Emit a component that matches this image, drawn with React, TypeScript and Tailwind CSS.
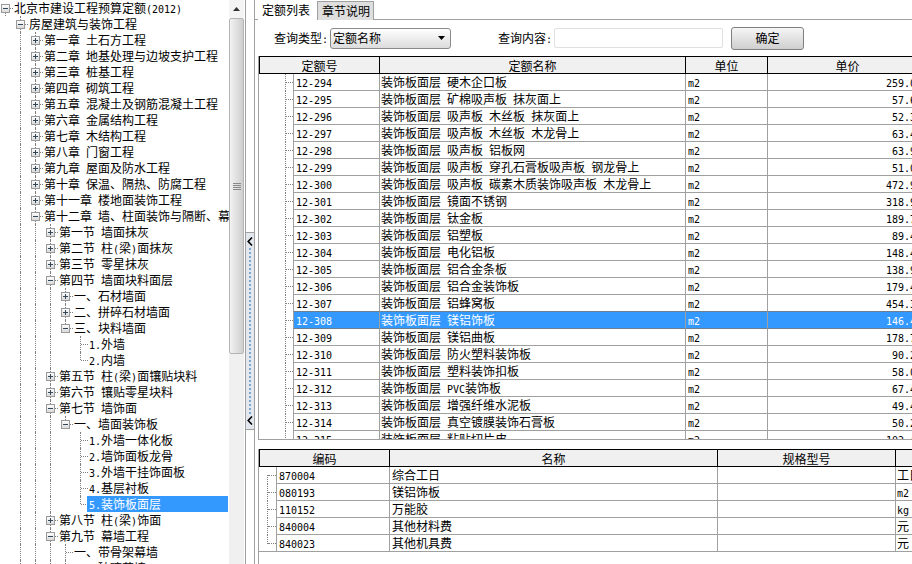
import React from "react";

const LINE = "border-[#a0a0a0]";

function T({ s }: { s: string }) {
  const parts = s.split(/([\x20-\x7e]+)/).filter(Boolean);
  return (
    <>
      {parts.map((p, i) =>
        /^[\x20-\x7e]+$/.test(p) ? (
          <span key={i} className="font-['DejaVu_Sans_Mono',monospace] text-[10px]">
            {p}
          </span>
        ) : (
          <span key={i}>{p}</span>
        )
      )}
    </>
  );
}

type TreeRow = [number, "m" | "p" | "l", string];

const tree: TreeRow[] = [
  [0, "m", "北京市建设工程预算定额(2012)"],
  [1, "m", "房屋建筑与装饰工程"],
  [2, "p", "第一章 土石方工程"],
  [2, "p", "第二章 地基处理与边坡支护工程"],
  [2, "p", "第三章 桩基工程"],
  [2, "p", "第四章 砌筑工程"],
  [2, "p", "第五章 混凝土及钢筋混凝土工程"],
  [2, "p", "第六章 金属结构工程"],
  [2, "p", "第七章 木结构工程"],
  [2, "p", "第八章 门窗工程"],
  [2, "p", "第九章 屋面及防水工程"],
  [2, "p", "第十章 保温、隔热、防腐工程"],
  [2, "p", "第十一章 楼地面装饰工程"],
  [2, "m", "第十二章 墙、柱面装饰与隔断、幕墙工程"],
  [3, "p", "第一节 墙面抹灰"],
  [3, "p", "第二节 柱(梁)面抹灰"],
  [3, "p", "第三节 零星抹灰"],
  [3, "m", "第四节 墙面块料面层"],
  [4, "p", "一、石材墙面"],
  [4, "p", "二、拼碎石材墙面"],
  [4, "m", "三、块料墙面"],
  [5, "l", "1.外墙"],
  [5, "l", "2.内墙"],
  [3, "p", "第五节 柱(梁)面镶贴块料"],
  [3, "p", "第六节 镶贴零星块料"],
  [3, "m", "第七节 墙饰面"],
  [4, "m", "一、墙面装饰板"],
  [5, "l", "1.外墙一体化板"],
  [5, "l", "2.墙饰面板龙骨"],
  [5, "l", "3.外墙干挂饰面板"],
  [5, "l", "4.基层衬板"],
  [5, "l", "5.装饰板面层"],
  [3, "p", "第八节 柱(梁)饰面"],
  [3, "m", "第九节 幕墙工程"],
  [4, "l", "一、带骨架幕墙"],
  [4, "p", "二、玻璃幕墙"],
];
const SELECTED_TREE = 31;

// Rows past the bottom of the picture: they keep the guide lines running.
const levels = [...tree.map((r) => r[0]), 4, 3, 2, 1];

function continues(i: number, lvl: number) {
  for (let k = i + 1; k < levels.length; k++) {
    if (levels[k] < lvl) return false;
    if (levels[k] === lvl) return true;
  }
  return false;
}

function Box({ plus }: { plus: boolean }) {
  return (
    <svg width="9" height="9" viewBox="0 0 9 9" className="absolute left-[3px] top-[4px]">
      <defs>
        <linearGradient id="bx" x1="0" y1="0" x2="0" y2="1">
          <stop offset="0" stopColor="#ffffff" />
          <stop offset="1" stopColor="#d8d8d8" />
        </linearGradient>
      </defs>
      <rect x="0.5" y="0.5" width="8" height="8" fill="url(#bx)" stroke="#9a9a9a" />
      <path d={plus ? "M2 4.5H7M4.5 2V7" : "M2 4.5H7"} stroke="#33475b" strokeWidth="1" />
    </svg>
  );
}

function Tree() {
  return (
    <div className="w-[229px] shrink-0 overflow-hidden h-full">
      {tree.map(([lvl, kind, text], i) => {
        const next = continues(i, lvl);
        const sel = i === SELECTED_TREE;
        return (
          <div key={i} className="flex h-[16px] -ml-[2px] leading-[16px] whitespace-pre">
            {Array.from({ length: lvl }).map((_, j) => (
              <div key={j} className="relative w-[15px] shrink-0">
                {continues(i, j) && (
                  <div className="absolute left-[7px] top-0 h-full border-l border-dotted border-[#808080]" />
                )}
              </div>
            ))}
            <div className="relative w-[15px] shrink-0">
              <div
                className={`absolute left-[7px] border-l border-dotted border-[#808080] ${
                  i === 0 ? "top-[8px] h-[8px]" : next ? "top-0 h-[16px]" : "top-0 h-[8px]"
                }`}
              />
              <div className="absolute left-[8px] top-[8px] w-[7px] border-t border-dotted border-[#808080]" />
              {kind !== "l" && <Box plus={kind === "p"} />}
            </div>
            <div
              className={`relative -ml-px pl-[2px] ${
                sel ? "flex-1 mr-[1px] bg-[#3399ff] text-white" : ""
              }`}
            >
              <T s={text} />
            </div>
          </div>
        );
      })}
    </div>
  );
}

function Scrollbar() {
  return (
    <div className="w-[16px] shrink-0 h-full flex flex-col pr-px">
      <div className="h-[18px] shrink-0 flex items-center justify-center bg-[#f4f4f4]">
        <svg width="7" height="4" viewBox="0 0 7 4">
          <path d="M3.5 0L7 4H0Z" fill="#333" />
        </svg>
      </div>
      <div className="h-[336px] shrink-0 rounded-[2px] border border-[#b4b4b4] bg-gradient-to-r from-[#f2f2f2] to-[#cfcfcf] flex items-center justify-center">
        <svg width="8" height="8" viewBox="0 0 8 8">
          <path d="M0 1.5H8M0 3.5H8M0 5.5H8M0 7.5H8" stroke="#8a8a8a" />
        </svg>
      </div>
      <div className="flex-1 bg-[#f0f0f0]" />
    </div>
  );
}

function Chevron() {
  return (
    <svg width="6" height="9" viewBox="0 0 6 9">
      <path d="M5 0.5L1.2 4.5L5 8.5" fill="none" stroke="#000" strokeWidth="1.6" />
    </svg>
  );
}

function Splitter() {
  return (
    <div className={`w-[10px] shrink-0 h-full border-l border-r ${LINE}`}>
      <div
        className={`mt-[232px] h-[198px] border-t border-b ${LINE} bg-[#e3e8ee] flex flex-col items-center justify-between py-[4px]`}
      >
        <Chevron />
        <div className="flex-1 my-[2px] border-l-2 border-dotted border-[#7ea6cf]" />
        <Chevron />
      </div>
    </div>
  );
}

function Head({ w, label }: { w: string; label: string }) {
  return (
    <div className={`${w} shrink-0 h-full border-r border-black flex items-center justify-center pt-px`}>
      {label}
    </div>
  );
}

const top = [
  ["12-294", "装饰板面层 硬木企口板", "259.00"],
  ["12-295", "装饰板面层 矿棉吸声板 抹灰面上", "57.60"],
  ["12-296", "装饰板面层 吸声板 木丝板 抹灰面上", "52.30"],
  ["12-297", "装饰板面层 吸声板 木丝板 木龙骨上", "63.40"],
  ["12-298", "装饰板面层 吸声板 铝板网", "63.90"],
  ["12-299", "装饰板面层 吸声板 穿孔石膏板吸声板 钢龙骨上", "51.00"],
  ["12-300", "装饰板面层 吸声板 碳素木质装饰吸声板 木龙骨上", "472.90"],
  ["12-301", "装饰板面层 镜面不锈钢", "318.90"],
  ["12-302", "装饰板面层 钛金板", "189.70"],
  ["12-303", "装饰板面层 铝塑板", "89.40"],
  ["12-304", "装饰板面层 电化铝板", "148.40"],
  ["12-305", "装饰板面层 铝合金条板", "138.90"],
  ["12-306", "装饰板面层 铝合金装饰板", "179.40"],
  ["12-307", "装饰板面层 铝蜂窝板", "454.30"],
  ["12-308", "装饰板面层 镁铝饰板", "146.40"],
  ["12-309", "装饰板面层 镁铝曲板", "178.70"],
  ["12-310", "装饰板面层 防火塑料装饰板", "90.20"],
  ["12-311", "装饰板面层 塑料装饰扣板", "58.00"],
  ["12-312", "装饰板面层 PVC装饰板", "67.40"],
  ["12-313", "装饰板面层 增强纤维水泥板", "49.40"],
  ["12-314", "装饰板面层 真空镀膜装饰石膏板", "50.20"],
  ["12-315", "装饰板面层 粘贴切片皮", "102.40"],
];
const SELECTED_TOP = 14;

function TopGrid() {
  return (
    <div className={`ml-[3px] h-[384px] shrink-0 border-l border-b ${LINE} overflow-hidden`}>
      <div className="flex h-[18px] border-t border-b border-l border-black bg-[#f0f0f0]">
        <Head w="w-[120px]" label="定额号" />
        <Head w="w-[306px]" label="定额名称" />
        <Head w="w-[82px]" label="单位" />
        <Head w="w-[160px]" label="单价" />
      </div>
      {top.map(([code, name, price], i) => {
        const sel = i === SELECTED_TOP;
        const lineColor = sel || i === SELECTED_TOP - 1 ? "border-b-[#6f7f8f]" : "border-b-[#a0a0a0]";
        const cell = `shrink-0 h-full border-b border-r border-r-[#a0a0a0] ${lineColor} ${
          sel ? "bg-[#3399ff] text-white" : ""
        }`;
        return (
          <div key={code} className="flex h-[17px] leading-[16px] whitespace-pre">
            <div className="relative w-[34px] shrink-0">
              <div className="absolute left-[26px] top-0 h-full border-l border-dotted border-[#808080]" />
              <div className="absolute left-[27px] top-[8px] w-[7px] border-t border-dotted border-[#808080]" />
            </div>
            <div className={`${cell} w-[87px] border-l border-l-[#a0a0a0] pl-[2px]`}>
              <T s={code} />
            </div>
            <div className={`${cell} w-[306px] pl-px`}>
              <T s={name} />
            </div>
            <div className={`${cell} w-[82px] pl-[2px]`}>
              <T s="m2" />
            </div>
            <div className={`${cell} w-[160px] pr-[5px] text-right`}>
              <T s={price} />
            </div>
          </div>
        );
      })}
    </div>
  );
}

const bottom = [
  ["870004", "综合工日", "工日"],
  ["080193", "镁铝饰板", "m2"],
  ["110152", "万能胶", "kg"],
  ["840004", "其他材料费", "元"],
  ["840023", "其他机具费", "元"],
];

function BottomGrid() {
  return (
    <div className={`ml-[3px] mt-[9px] flex-1 min-h-0 border-l ${LINE} overflow-hidden`}>
      <div className="flex h-[18px] border-t border-b border-l border-black bg-[#f0f0f0]">
        <Head w="w-[130px]" label="编码" />
        <Head w="w-[328px]" label="名称" />
        <Head w="w-[178px]" label="规格型号" />
        <div className="w-[100px] shrink-0" />
      </div>
      {bottom.map(([code, name, unit], i) => {
        const last = i === bottom.length - 1;
        const cell = `shrink-0 h-full border-b border-r ${LINE}`;
        return (
          <div key={code} className="flex h-[17px] leading-[16px] whitespace-pre">
            <div className={`relative w-[17px] shrink-0 ${last ? `border-b ${LINE}` : ""}`}>
              <div
                className={`absolute left-[8px] border-l border-dotted border-[#808080] ${
                  i === 0 ? "top-[8px] h-[9px]" : last ? "top-0 h-[9px]" : "top-0 h-full"
                }`}
              />
              <div className="absolute left-[9px] top-[8px] w-[8px] border-t border-dotted border-[#808080]" />
            </div>
            <div className={`${cell} w-[114px] border-l pl-[2px]`}>
              <T s={code} />
            </div>
            <div className={`${cell} w-[328px] pl-[2px]`}>
              <T s={name} />
            </div>
            <div className={`${cell} w-[178px]`} />
            <div className={`${cell} w-[100px] pl-px`}>
              <T s={unit} />
            </div>
          </div>
        );
      })}
    </div>
  );
}

function Tabs() {
  return (
    <div className={`flex h-[20px] shrink-0 border-b ${LINE} pl-[3px]`}>
      <div className="w-[59px] h-[20px] bg-white pl-[4px] leading-[20px]">定额列表</div>
      <div className={`w-[57px] h-[19px] mt-px bg-[#dedede] border-l border-t border-r ${LINE} pl-[4px] leading-[18px]`}>
        章节说明
      </div>
    </div>
  );
}

function Query() {
  return (
    <div className="flex h-[36px] shrink-0 pt-[7px] pl-[19px]">
      <div className="flex h-[22px] items-center">
        <div className="w-[54px] whitespace-pre">
          <T s="查询类型:" />
        </div>
        <div className="ml-[2px] w-[121px] h-[21px] rounded-[3px] border border-[#8a8a8a] bg-gradient-to-b from-white to-[#dcdcdc] flex items-center justify-between pl-[2px] pr-[5px]">
          <span>定额名称</span>
          <svg width="7" height="4" viewBox="0 0 7 4">
            <path d="M0 0H7L3.5 4Z" fill="#000" />
          </svg>
        </div>
        <div className="ml-[47px] w-[54px] whitespace-pre">
          <T s="查询内容:" />
        </div>
        <div className="ml-[2px] w-[169px] h-[20px] rounded-[2px] border border-[#e0e0e0] bg-white" />
        <div className="ml-[8px] w-[73px] h-[23px] rounded-[3px] border border-[#808080] bg-gradient-to-b from-[#f6f6f6] to-[#cfcfcf] flex items-center justify-center">
          确定
        </div>
      </div>
    </div>
  );
}

export default function App() {
  return (
    <div className="flex w-[912px] h-[564px] overflow-hidden bg-white text-black text-[12px] font-['Noto_Sans_CJK_SC',sans-serif]">
      <Tree />
      <Scrollbar />
      <Splitter />
      <div className="flex-1 min-w-0 h-full flex flex-col overflow-hidden">
        <Tabs />
        <Query />
        <TopGrid />
        <BottomGrid />
      </div>
    </div>
  );
}
